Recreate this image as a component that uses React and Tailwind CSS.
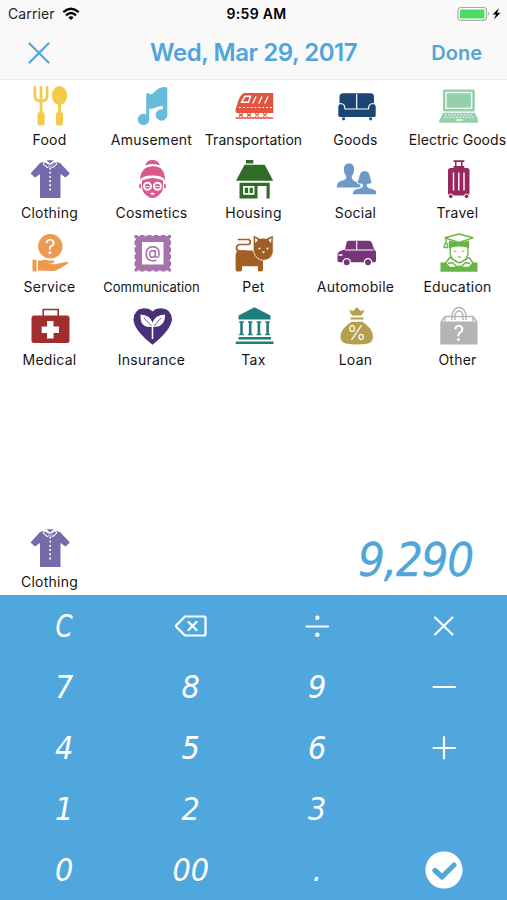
const Food = () => (
  <g fill="#f3ca4c">
    <path d="M4.900 1.500v8.500q0 4.800 6.100 5.300q6.100-.5 6.100-5.300V1.500M11 1v26" fill="none" stroke="#f3ca4c" strokeWidth="2.800" strokeLinecap="round" />
    <rect x="7.400" y="26" width="7.200" height="13.500" rx="2.500" />
    <ellipse cx="29.500" cy="9.500" rx="7.600" ry="9.500" />
    <path d="M28 18h3v9h-3z" />
    <rect x="25.900" y="26" width="7.200" height="13.500" rx="2.500" />
  </g>
);

const Amusement = () => (
  <g fill="#67bbdc">
    <circle cx="11.500" cy="33.500" r="5.700" />
    <circle cx="29.500" cy="29" r="5.800" />
    <path d="M14.200 8q1.300-2 3-.3q2.500 1.800 6-2.500Q27.500.8 34 1q1.300.2 1.300 1.500V29h-4.600V20q-3.500-.5-7 1.500q-2.500 1.500-6.500 1.300V33.500h-3z" />
  </g>
);

const Transportation = () => (
  <g fill="#e1543f">
    <path d="M10 7h29.200v20H3Q1 26 1.500 23.500L3 19Q5.500 9 10 7z" />
    <path d="M11 10.300h5.500l-2 6H7.500zM22 10.500l-3.300 7M28 10.500l-3.300 7M34 10.500l-3.300 7" fill="none" stroke="#fff" strokeWidth="1.400" />
    <path d="M5 21.500h34" stroke="#fff" strokeWidth="1.200" strokeDasharray="1.800 2.100" />
    <path d="M5 25.900h34.200M1.500 32h37.700" stroke="#e1543f" strokeWidth="1.600" />
    <path d="M5 27.500l4 3m0-3l-4 3m8-3l4 3m0-3l-4 3m8-3l4 3m0-3l-4 3m8-3l4 3m0-3l-4 3" stroke="#e1543f" strokeWidth="1.300" />
  </g>
);

const Goods = () => (
  <g fill="#1b4673">
    <rect x="3.500" y="7.300" width="34.500" height="20" rx="3.500" />
    <path d="M20.700 8v15" stroke="#fff" strokeWidth="1.200" />
    <path d="M4.500 17.500q4.500 0 4.500 5.500H32.500q0-5.500 4.500-5.500q3.300.3 3.300 4v8q0 2-2 2H3.700q-2 0-2-2v-8q0-3.700 2.800-4z" stroke="#fff" strokeWidth="1.200" />
    <path d="M6 31.500h3.200l-.5 2.700H6.500zM33 31.500h3.200l-.5 2.700h-2.200z" />
  </g>
);

const ElectricGoods = () => (
  <g fill="#94d0ac">
    <rect x="5" y="3.500" width="31.800" height="22" rx="1.500" />
    <rect x="8" y="6.500" width="25.600" height="15.800" fill="#94d0ac" stroke="#fff" strokeWidth="1.300" />
    <path d="M5 26.800h31.800l4 8.500q.2 1.500-1.300 1.500H2.300Q.8 36.800 1 35.300z" />
    <path d="M7 28.800h28M6 31.200h30" stroke="#fff" strokeWidth="1" strokeDasharray="1.600 1.500" />
    <path d="M18 34h7" stroke="#fff" strokeWidth="1.300" />
  </g>
);

const Clothing = () => (
  <g fill="#736ca9">
    <path d="M13.500 2.800L20 6l6.500-3.200 3.800 1.500L39.500 14q.3.700-.3 1.300l-3.700 3.200-5-3.500v24H10V15l-5 3.500-3.700-3.200q-.6-.6-.3-1.300L9.700 4.300z" />
    <path d="M14 2l6 5.500L26 2l1.300 3.200-4.500 4L20 7l-2.800 2.200-4.500-4z" fill="#fff" />
    <path d="M15.200 3.200l4 3.800-1.500 1-4-3zM24.800 3.200l-4 3.800 1.500 1 4-3z" />
    <path d="M16.500 1.200h7.200L20 4.500z" />
    <path d="M20.200 8.500v25" stroke="#fff" strokeWidth="1.700" strokeDasharray="1.900 2.300" />
  </g>
);

const Cosmetics = () => (
  <g fill="#d9588d">
    <path d="M13.200 6.500Q14.500 1 20.500 1t7.300 5.500q-7.300-2.800-14.600 0z" />
    <path d="M8.300 21.500Q8 8 20.500 7.300T33 21.500Q31.500 16.500 20.500 16.500T8.300 21.500z" />
    <path d="M10 21.500q10.500-5 21 0v7.500Q30 35 24 38.200q-3.500 1.600-7 0Q11 35 10 29z" />
    <path d="M8.900 24.300v5.500q-2.200-.7-2-3 .2-1.900 2-2.500zM32.100 24.300v5.500q2.200-.7 2-3-.2-1.900-2-2.500z" />
    <circle cx="15.500" cy="27.300" r="3.500" fill="#d9588d" stroke="#fff" strokeWidth="2" />
    <circle cx="25.500" cy="27.300" r="3.500" fill="#d9588d" stroke="#fff" strokeWidth="2" />
    <path d="M13.700 27.600h3.500m6.500 0h3.500" stroke="#fff" strokeWidth="1" />
    <path d="M17.800 34.500l2.700-1 2.700 1-2.700 1.500z" fill="#fff" />
  </g>
);

const Housing = () => (
  <g fill="#316b28">
    <path d="M12 1h7.300v3.600H12zM10.500 5.700h20.200L39.200 21.800H2z" />
    <path fillRule="evenodd" d="M5.500 23.800h30.200V39.500h-3.200V27h-9v12.500h-18zM9 27v8.700h11.500V27z" />
    <path d="M10.800 28.800h3.300V34h-3.300zM15.600 28.800h3.300V34h-3.300z" />
  </g>
);

const Social = () => (
  <g fill="#6e99c7">
    <path d="M8 9q.3-4.500 5-4.500T18 9v3q-.5 3.700-2.200 5v2.500Q17 22 21 23q3.500 1 3.500 5.500H.8Q.5 23.500 4.500 22.300q4.500-1 5.700-2.800V17Q8.500 15.500 8 12z" />
    <path d="M28.700 11.700q4.500 0 5.400 5l2.100 7.300q-2.500 1.500-5 1.300v2.200q1 1.300 5.500 2.300t4.800 6H16.300q0-5 4.500-6 5-1 5.700-2.300v-2.200q-3 0-5.500-1.300l2.200-7.300q1-5 5.500-5z" stroke="#fff" strokeWidth=".9" />
  </g>
);

const Travel = () => (
  <g fill="#98275d">
    <path d="M15.500 1.300h10.800v1.600H15.500zM17 2.500h1.500V8H17zM23 2.500h1.500V8H23zM15.500 7h10.800v2H15.500z" />
    <rect x="10" y="9" width="21.500" height="27.500" rx="2.500" />
    <path d="M15.500 13.500v18M20.800 13.500v18M26 13.500v18" stroke="#fff" strokeWidth="1.400" />
    <circle cx="12.800" cy="37.300" r="2.300" stroke="#fff" />
    <circle cx="28.500" cy="37.300" r="2.300" stroke="#fff" />
  </g>
);

const Service = () => (
  <g fill="#ed9a50">
    <circle cx="20.300" cy="13.300" r="12.200" />
    <text x="20.300" y="20.600" fontSize="20" textAnchor="middle" fill="#fff" fontFamily="Inter">?</text>
    <path d="M2.500 26.700h4V38.500h-4zM8 27.500h3.500q4-1.300 6.500 0h5.500q1.500 1.200-.2 2.800l-6 .8 8 .2Q32 29.500 37.500 28.800q1.300.5.700 1.500-6.200 4.700-12.200 7.200-1.500.7-4 .4L8 37.500z" />
  </g>
);

const edge = [6.5, 13.5, 20.5, 27.5, 34.5];
const Communication = () => (
  <g fill="#a773ad">
    <path fillRule="evenodd" d="M2.500 2h36.500v36.500H2.500zM10 9v22.500h21.500V9z" />
    <g fill="#fff">
      {edge.map((p) => (
        <g key={p}>
          <circle cx={p + 0.3} cy="1.500" r="1.700" />
          <circle cx={p + 0.3} cy="39" r="1.700" />
          <circle cx="2" cy={p - 0.2} r="1.700" />
          <circle cx="39.500" cy={p - 0.2} r="1.700" />
        </g>
      ))}
    </g>
    <text x="20.700" y="25" fontSize="16.500" fontWeight="500" textAnchor="middle" fontFamily="Inter">@</text>
  </g>
);

const Pet = () => (
  <g fill="#a15f26">
    <path d="M4.500 6.500h9.500q2.300.3 2.300 2.500t-2.300 2.500H5.500Q2.500 12 2.500 15t3.500 3h6" fill="none" stroke="#a15f26" strokeWidth="1.700" strokeLinecap="round" />
    <path d="M1.600 23q0-5.500 4-5.500H20l9 9v10q0 2-2 2h-1.500q-1.700 0-1.700-1.800v-3.500H8v3.500Q8 38.500 6.300 38.500H3.500q-1.900 0-1.900-2z" />
    <path d="M19.200 2l7 3.500q3-1 6.200 0l6.800-3.500v17.500Q37 27.300 29.500 27.300T19.200 18z" stroke="#fff" strokeWidth=".8" />
    <path d="M21 5l3 2-2.500 3zM37.500 5l-3 2 2.500 3z" fill="#fff" />
    <circle cx="25.500" cy="15.500" r="1" fill="#fff" />
    <circle cx="33.500" cy="15.500" r="1" fill="#fff" />
    <path d="M27.800 18.500h3.400l-1.700 2z" fill="#fff" />
  </g>
);

const Automobile = () => (
  <g fill="#773476">
    <path d="M9 16.500l1.600-7q.4-1.800 2-1.800H33q2 0 2.600 1.500L38.500 17q1.500.5 1.500 2.500v8q0 1.800-1.800 1.800H3.300q-1.800 0-1.800-1.800v-6q0-3.500 7.500-5z" />
    <path d="M20.700 8v9M9 17h28.500" stroke="#fff" strokeWidth="1.100" />
    <circle cx="10.700" cy="29.300" r="3.600" stroke="#fff" strokeWidth="1.300" />
    <circle cx="32" cy="29.300" r="3.600" stroke="#fff" strokeWidth="1.300" />
    <path d="M3 22h3" stroke="#fff" strokeWidth="1.300" strokeLinecap="round" />
  </g>
);

const Education = () => (
  <g fill="none" stroke="#68b546" strokeWidth="1.400" strokeLinejoin="round">
    <path d="M2.500 29.500h37v9.300h-37z" fill="#68b546" stroke="none" />
    <path d="M12.200 14v6q.8 6.500 5.800 8v1.500h6.500V28q5-1.500 5.500-8v-6" fill="#fff" />
    <path d="M18 28.500l-6-4-4.500 5.500 4 4.500h19.500l4-4.500-4-5.500-6.500 4q-3.300 2.500-6.500 0z" fill="#fff" />
    <path d="M10 30.500l4.500-1 4 4h5l4-4 4.500 1" />
    <path d="M11.500 8.500q9.500 3 19 0v5.800q-9.500-3-19 0z" fill="#68b546" />
    <path d="M7 4.800L21 1l14 3.800-14 4.700z" fill="#fff" />
    <path d="M8 5v5.500M6 14.500q1-6 2.700-4t.8 4z" />
    <path d="M16 18.200h2.500m5.500 0h2.500M19.500 24h3.500" strokeWidth="1" />
  </g>
);

const Medical = () => (
  <g fill="#a12d2c">
    <path d="M13.200 11V3.500h15V11" fill="none" stroke="#a12d2c" strokeWidth="1.600" />
    <rect x="1.500" y="9.500" width="38" height="27.500" rx="2.500" />
    <path d="M17 15h6.500v5.500H29V27h-5.500v5.500H17V27h-5.300v-6.500H17z" fill="#fff" />
  </g>
);

const Insurance = () => (
  <g fill="#493078">
    <path d="M20.500 38.700Q1.800 24 1.500 13.500 2 3 11.500 2.300 17.500 2.300 20.500 5.500q3-3.200 9-3.200Q39.500 3 40 13.500 39 24 20.500 38.700z" />
    <path d="M19.700 21Q12 21.500 9.500 16.500 8.200 13 8.500 8.500q10 .8 12 8Q23 9 33 8.500q.3 5.500-2.500 9T21.300 21v12h-1.600z" fill="#fff" />
    <path d="M12 12l7.500 8m9.500-8l-7 8" stroke="#493078" strokeWidth=".8" />
  </g>
);

const Tax = () => (
  <g fill="#1e7e7b">
    <path d="M20.500 1.300L36.500 9.500v4H4.500v-4zM4.500 31h32.500v2.500H4.500zM1.800 35.500h37.700V38H1.800z" />
    {[7.5, 16.2, 24.9, 33.6].map((x) => (
      <path key={x} d={`M${x - 2.3} 15.300h4.600v1.500h-1v11h1v1.500h-4.600v-1.500h1v-11h-1z`} />
    ))}
  </g>
);

const Loan = () => (
  <g fill="#b59f4d">
    <path d="M13.500 3.500q3 2.500 4.500.5L20.800 1 23.500 4q1.500 2 4.700-.5 0 3-3.200 6h-8.500q-3-3-3-6zM14.500 11.500h13v2h-13z" />
    <path d="M15.500 15.800h10.800Q37 22.500 37 31q-.3 5-5 6.500-11 2.200-22.500 0Q4.700 36 4.500 31q0-8.500 11-15.200z" />
    <text x="20.700" y="34.300" fontSize="20" fontWeight="300" textAnchor="middle" fill="#fff" fontFamily="Inter">%</text>
  </g>
);

const Other = () => (
  <g fill="#b4b4b4">
    <path d="M2.300 15.500h37.200v23H2.300z" />
    <path d="M3 16l4-5.500h28l4 5.500M7 10.500v5M35 10.500v5M14 14V9q1.500-7.500 7-7.500T28 9v5M17 14V9.500Q18 5 21 5t4 4.500V14" fill="none" stroke="#b4b4b4" strokeWidth="1.400" />
    <text x="20.900" y="34.500" fontSize="21" textAnchor="middle" fill="#fff" fontFamily="Inter">?</text>
  </g>
);

const categories = [
  { name: "Food", Icon: Food },
  { name: "Amusement", Icon: Amusement },
  { name: "Transportation", Icon: Transportation, tight: true },
  { name: "Goods", Icon: Goods },
  { name: "Electric Goods", Icon: ElectricGoods, tight: true },
  { name: "Clothing", Icon: Clothing },
  { name: "Cosmetics", Icon: Cosmetics },
  { name: "Housing", Icon: Housing },
  { name: "Social", Icon: Social },
  { name: "Travel", Icon: Travel },
  { name: "Service", Icon: Service },
  { name: "Communication", Icon: Communication, small: true },
  { name: "Pet", Icon: Pet },
  { name: "Automobile", Icon: Automobile },
  { name: "Education", Icon: Education },
  { name: "Medical", Icon: Medical },
  { name: "Insurance", Icon: Insurance },
  { name: "Tax", Icon: Tax },
  { name: "Loan", Icon: Loan },
  { name: "Other", Icon: Other },
];

const labelSize = ({ small, tight }) => {
  if (small) return "text-[13px]";
  return tight ? "text-sm tracking-[0.05px]" : "text-sm tracking-[0.25px]";
};

const Category = ({ name, Icon, small, tight }) => (
  <button className="flex w-[102px] flex-col items-center">
    <svg viewBox="0 0 40 40" className="size-10">
      <Icon />
    </svg>
    <span className={`mt-1 h-5 whitespace-nowrap leading-5 text-[#151515] ${labelSize({ small, tight })}`}>
      {name}
    </span>
  </button>
);

const Stroke = ({ d, dots }) => (
  <svg viewBox="0 0 32 32" className="size-8" fill="none" stroke="currentColor" strokeWidth="2.200" strokeLinecap="round" strokeLinejoin="round">
    <path d={d} />
    {dots && <path d={dots} strokeWidth="4.400" />}
  </svg>
);

const Check = () => (
  <svg viewBox="0 0 38 38" className="size-[38px]">
    <circle cx="19" cy="19" r="18.600" fill="#fff" />
    <path d="M10 19.500l7 6.500 12-12" fill="none" stroke="#50a7dd" strokeWidth="5.200" strokeLinecap="round" strokeLinejoin="round" />
  </svg>
);

const keys = [
  "C",
  <Stroke key="del" d="M10 6.500h19q1.500 0 1.500 1.500v16q0 1.500-1.500 1.500H10L1.500 17q-1-1 0-2zM13.500 12l8 8m0-8l-8 8" />,
  <Stroke key="div" d="M5.500 16.500h21.500" dots="M16.300 7.700v.01M16.300 24.700v.01" />,
  <Stroke key="mul" d="M7 7.500l17.500 17m0-17L7 24.500" />,
  "7", "8", "9",
  <Stroke key="sub" d="M5.500 16h21.500" />,
  "4", "5", "6",
  <Stroke key="add" d="M5.500 16h21.500M16 5v21.500" />,
  "1", "2", "3", "",
  "0", "00", ".",
  <Check key="ok" />,
];

export default function App() {
  return (
    <div className="flex h-[900px] w-[507px] flex-col overflow-hidden bg-white font-['Inter',sans-serif]">
      <header className="h-20 shrink-0 border-b border-[#ebebeb] bg-[#f9f9f9]">
        <div className="grid h-[27px] grid-cols-3 items-center text-[14px] text-black">
          <div className="flex items-center gap-[7px] pl-2 text-[#222]">
            <span className="tracking-[0.1px]">Carrier</span>
            <svg viewBox="0 0 18 14" className="h-3.5 w-[18px]" fill="none" stroke="#000">
              <path d="M1.300 5.200q7.700-6.800 15.400 0M4 8.300q5-4.500 10 0" strokeWidth="2.300" />
              <path d="M9 13L6.300 10.300q2.700-2.200 5.400 0z" fill="#000" stroke="none" />
            </svg>
          </div>
          <span className="pl-1.5 text-center font-semibold tracking-[0.3px]">9:59 AM</span>
          <svg viewBox="0 0 46 16" className="mr-1 h-4 w-[46px] justify-self-end">
            <rect x="1" y="1.500" width="28.500" height="12.800" rx="3" fill="#fff" stroke="#a9a9a9" strokeWidth="1.200" />
            <rect x="3" y="3.500" width="24.500" height="9" rx="1" fill="#4cd964" />
            <path d="M31 5.500q2 2.200 0 4.500z" fill="#a9a9a9" />
            <path d="M42 2l-6.500 6.500h3.500L37 13.500l6.500-6.800H40z" fill="#000" />
          </svg>
        </div>
        <div className="flex h-[51px] items-center justify-between px-[25px] text-[#50a5da]">
          <svg viewBox="0 0 22 22" className="ml-[3px] size-[22px]" fill="none" stroke="currentColor" strokeWidth="2.200" strokeLinecap="round">
            <path d="M1.500 1.500l19 19M20.500 1.500l-19 19" />
          </svg>
          <h1 className="pl-[26px] text-[24px] font-semibold tracking-[-0.45px]">Wed, Mar 29, 2017</h1>
          <button className="text-[20px] font-semibold">Done</button>
        </div>
      </header>

      <section className="-ml-[1.5px] mt-1.5 grid w-[510px] auto-rows-[73.3px] grid-cols-5">
        {categories.map((c) => (
          <Category key={c.name} {...c} />
        ))}
      </section>

      <section className="mt-auto flex h-[67px] items-start justify-between pr-[34px]">
        <div className="-ml-[1.5px]">
          <Category name="Clothing" Icon={Clothing} />
        </div>
        <output className="pt-px font-['DejaVu_Sans_Condensed','DejaVu_Sans'] text-[47px] italic leading-[62px] tracking-[-1.2px] text-[#50a5da] [-webkit-text-stroke:0.3px_#50a5da]">
          9,290
        </output>
      </section>

      <section className="grid h-[305px] shrink-0 grid-cols-4 grid-rows-5 bg-[#50a7dd] pl-px font-['DejaVu_Sans_Condensed','DejaVu_Sans'] text-[32px] italic text-white">
        {keys.map((k, i) => (
          <button key={i} className="flex items-center justify-center">
            {k === "C" ? <span className="scale-x-[0.85]">C</span> : k}
          </button>
        ))}
      </section>
    </div>
  );
}
